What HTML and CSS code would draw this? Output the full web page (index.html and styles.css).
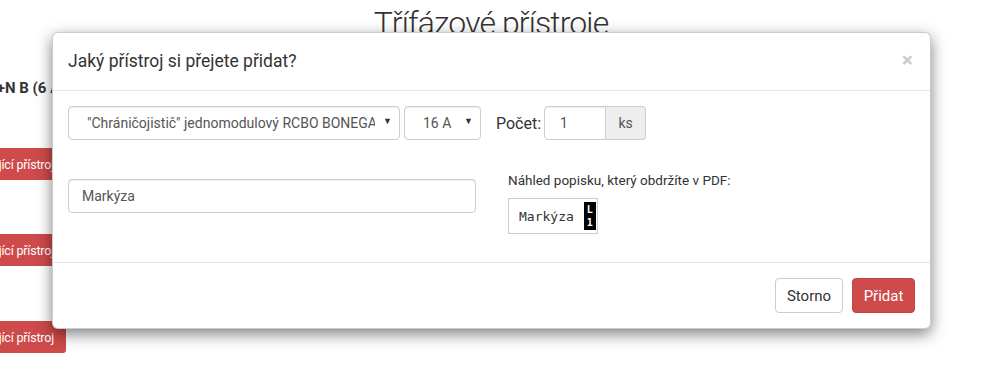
FILE: index.html
```html
<!DOCTYPE html>
<html lang="cs">

<head>
    <meta charset="UTF-8">
    <meta name="viewport" content="width=device-width, initial-scale=1.0">
    <title>Třífázové přístroje</title>
    <link rel="stylesheet" href="styles.css">
</head>

<body>

    <div class="page">
        <h1 class="page-title">Třífázové přístroje</h1>

        <div class="side">
            <div class="side-head">3F+N B (6 A)</div>
            <button class="btn-side">Přidat existující přístroj</button>
            <button class="btn-side">Přidat existující přístroj</button>
            <button class="btn-side">Přidat existující přístroj</button>
        </div>
    </div>

    <!-- dialog pro přidání přístroje -->
    <div class="modal">
        <div class="modal-header">
            <h4 class="modal-title">Jaký přístroj si přejete přidat?</h4>
            <span class="close">&times;</span>
        </div>

        <div class="modal-body">
            <div class="form-inline">
                <div class="select-wrap type">
                    <select class="form-control">
                        <option>"Chráničojistič" jednomodulový RCBO BONEGA</option>
                    </select>
                    <span class="caret">&#9660;</span>
                </div>
                <div class="select-wrap amp">
                    <select class="form-control">
                        <option>16 A</option>
                    </select>
                    <span class="caret">&#9660;</span>
                </div>
                <label class="count-label">Počet:</label>
                <div class="input-group">
                    <input class="form-control count" type="text" value="1">
                    <span class="addon">ks</span>
                </div>
            </div>

            <div class="row">
                <div class="col col-left">
                    <input class="form-control name" type="text" value="Markýza">
                </div>
                <div class="col">
                    <div class="preview-label">Náhled popisku, který obdržíte v PDF:</div>
                    <div class="preview">
                        <span class="preview-text">Markýza</span>
                        <span class="preview-phase">L<br>1</span>
                    </div>
                </div>
            </div>
        </div>

        <div class="modal-footer">
            <button class="btn btn-default">Storno</button>
            <button class="btn btn-danger">Přidat</button>
        </div>
    </div>

</body>

</html>
```

FILE: styles.css
```css
html,
body {
    margin: 0;
    padding: 0;
    background: #fff;
    font-family: Roboto, "Noto Sans", sans-serif;
    color: #333;
    font-size: 14px;
}

.page {
    position: relative;
    height: 369px;
    overflow: hidden;
}

.page-title {
    margin: 0;
    padding-top: 5px;
    text-align: center;
    font-size: 32px;
    font-weight: 300;
    line-height: 36px;
    letter-spacing: -.9px;
    padding-right: 18px;
}

.side {
    width: 66px;
    overflow: hidden;
    display: flex;
    flex-direction: column;
    align-items: flex-end;
}

.side-head {
    margin-top: 38px;
    align-self: flex-start;
    margin-left: -20px;
    white-space: nowrap;
    font-weight: bold;
    font-size: 15px;
}

.btn-side {
    margin-top: 51px;
    flex-shrink: 0;
    white-space: nowrap;
    background: #cf4a4a;
    color: #fff;
    border: 0;
    border-radius: 3px;
    font-family: inherit;
    font-size: 12.5px;
    letter-spacing: -.2px;
    height: 32px;
    padding: 0 12px;
}

.btn-side + .btn-side {
    margin-top: 54px;
}

.btn-side:last-child {
    margin-top: 55px;
}

.modal {
    position: absolute;
    left: 52px;
    top: 32px;
    width: 877px;
    background: #fff;
    border: 1px solid rgba(0, 0, 0, .2);
    border-radius: 6px;
    box-shadow: 0 5px 15px rgba(0, 0, 0, .5);
}

.modal-header {
    display: flex;
    align-items: center;
    justify-content: space-between;
    padding: 15px;
    border-bottom: 1px solid #e5e5e5;
}

.modal-title {
    margin: 0;
    font-size: 17.5px;
    font-weight: normal;
    line-height: 27px;
}

.close {
    font-size: 21px;
    font-weight: bold;
    color: #000;
    opacity: .2;
    margin-right: 2px;
    margin-top: -4px;
}

.modal-body {
    padding: 15px 15px 28px;
}

.form-control {
    box-sizing: border-box;
    height: 34px;
    border: 1px solid #ccc;
    border-radius: 4px;
    font-family: inherit;
    font-size: 14px;
    color: #555;
    background: #fff;
    box-shadow: inset 0 1px 1px rgba(0, 0, 0, .075);
}

.form-inline {
    display: flex;
    align-items: center;
}

.select-wrap {
    position: relative;
}

.select-wrap select {
    appearance: none;
    -webkit-appearance: none;
    width: 100%;
    padding: 0 24px 0 18px;
    overflow: hidden;
}

.select-wrap.type {
    width: 332px;
    margin-right: 4px;
}

.select-wrap.amp {
    width: 77px;
}

.caret {
    position: absolute;
    right: 8px;
    top: 10px;
    font-size: 9px;
    color: #333;
    pointer-events: none;
}

.count-label {
    margin-left: 15px;
    margin-right: 3px;
    font-size: 16px;
}

.input-group {
    display: flex;
}

.count {
    width: 62px;
    padding: 0 15px;
    border-radius: 4px 0 0 4px;
}

.addon {
    box-sizing: border-box;
    width: 40px;
    height: 34px;
    line-height: 32px;
    text-align: center;
    border: 1px solid #ccc;
    border-left: 0;
    border-radius: 0 4px 4px 0;
    background: #eee;
    color: #555;
}

.row {
    display: grid;
    grid-template-columns: 408px 1fr;
    column-gap: 31px;
    margin-top: 31px;
}

.col-left {
    padding-top: 8px;
}

.name {
    width: 100%;
    padding: 0 13px;
}

.preview-label {
    font-size: 13.5px;
    line-height: 20px;
    margin-top: -1px;
    margin-left: 1px;
}

.preview {
    display: inline-flex;
    align-items: center;
    margin-top: 8px;
    margin-left: 1px;
    height: 36px;
    box-sizing: border-box;
    border: 1px solid #ccc;
    background: #fff;
    padding: 0 1px 0 10px;
}

.preview-text {
    font-family: "DejaVu Sans Mono", monospace;
    font-size: 13px;
    margin-right: 10px;
}

.preview-phase {
    background: #000;
    color: #fff;
    font-family: "DejaVu Sans Mono", monospace;
    font-weight: bold;
    font-size: 10px;
    line-height: 13px;
    padding: 1px 3px;
    height: 28px;
    box-sizing: border-box;
}

.modal-footer {
    display: flex;
    justify-content: flex-end;
    gap: 9px;
    padding: 15px;
    border-top: 1px solid #e5e5e5;
}

.btn {
    height: 35px;
    padding: 0;
    border-radius: 4px;
    font-family: inherit;
    font-size: 15px;
    cursor: pointer;
}

.btn-default {
    width: 68px;
    background: #fff;
    border: 1px solid #ccc;
    color: #333;
}

.btn-danger {
    width: 63px;
    background: #cf4a4a;
    border: 1px solid #c64343;
    color: #fff;
}
```
